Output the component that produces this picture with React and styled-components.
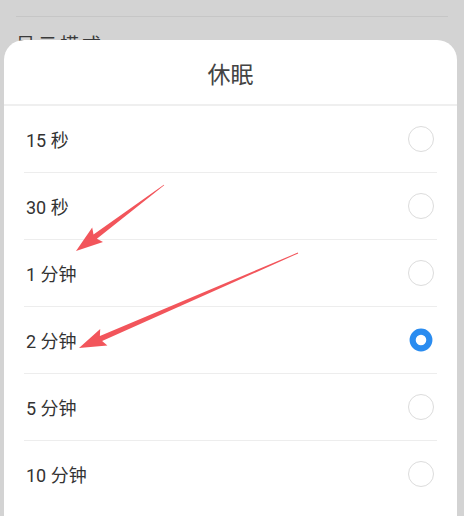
import React from 'react';
import styled, { createGlobalStyle } from 'styled-components';

const GlobalStyle = createGlobalStyle`
  html, body {
    margin: 0;
    padding: 0;
    background: #d3d3d3;
    font-family: Roboto, "Noto Sans CJK SC", sans-serif;
  }
`;

const Screen = styled.div`
  position: relative;
  width: 464px;
  height: 516px;
  overflow: hidden;
  background-color: #d3d3d3;
`;

const BehindList = styled.div`
  padding: 16px 16px 0 16px;
`;

const BehindRow = styled.div`
  border-top: 1px solid #c6c6c6;
  padding-top: 13px;
  font-size: 19px;
  color: #3a3a3a;
  letter-spacing: 3px;
`;

// the bottom sheet lies over the settings page
const Sheet = styled.div`
  position: absolute;
  left: 4px;
  right: 7px;
  top: 40px;
  bottom: 0;
  background-color: #fff;
  border-radius: 20px 20px 0 0;
  display: flex;
  flex-flow: column;
`;

const Header = styled.div`
  height: 66px;
  box-sizing: border-box;
  display: flex;
  justify-content: center;
  align-items: center;
  padding-top: 2px;
  font-size: 23px;
  color: #444;
  border-bottom: 2px solid #efefef;
`;

const List = styled.div`
  display: flex;
  flex-flow: column;
  padding: 0 20px;
`;

const Row = styled.div`
  height: 67px;
  display: flex;
  align-items: center;
  justify-content: space-between;
  border-bottom: 1px solid ${p => (p.$last ? 'transparent' : '#ededed')};
  box-sizing: border-box;

  & > span {
    font-size: 18px;
    color: #333;
    padding-left: 2px;
  }
`;

const Radio = styled.div`
  width: 26px;
  height: 26px;
  margin-right: 3px;
  border-radius: 50%;
  box-sizing: border-box;
  border: ${p => (p.$checked ? '7px solid #2a8cf0' : '1.5px solid #dcdcdc')};
  ${p => p.$checked && 'transform: scale(0.88);'}
`;

const Overlay = styled.svg`
  position: absolute;
  left: 0;
  top: 0;
  pointer-events: none;
`;

const options = ['15 秒', '30 秒', '1 分钟', '2 分钟', '5 分钟', '10 分钟'];

function arrowPoints(tx, ty, hx, hy) {
  const len = Math.hypot(hx - tx, hy - ty);
  const dx = (hx - tx) / len;
  const dy = (hy - ty) / len;
  const nx = -dy;
  const ny = dx;
  const L = 24;
  const W = 9;
  const bx = hx - dx * L;
  const by = hy - dy * L;
  const wx = bx - dx * 3;
  const wy = by - dy * 3;
  const pts = [
    [tx + nx * 0.4, ty + ny * 0.4],
    [bx + nx * 2.8, by + ny * 2.8],
    [wx + nx * W, wy + ny * W],
    [hx, hy],
    [wx - nx * W, wy - ny * W],
    [bx - nx * 2.8, by - ny * 2.8],
    [tx - nx * 0.4, ty - ny * 0.4],
  ];
  return pts.map(p => p.map(v => v.toFixed(1)).join(',')).join(' ');
}

export default function App() {
  return (
    <Screen>
      <GlobalStyle />
      <BehindList>
        <BehindRow>显示模式</BehindRow>
      </BehindList>
      <Sheet>
        <Header>休眠</Header>
        <List>
          {options.map((o, i) => (
            <Row key={o} $last={i === options.length - 1}>
              <span>{o}</span>
              <Radio $checked={o === '2 分钟'} />
            </Row>
          ))}
        </List>
      </Sheet>
      <Overlay width="464" height="516" viewBox="0 0 464 516">
        <polygon points={arrowPoints(164, 185, 76, 251)} fill="#f2555b" />
        <polygon points={arrowPoints(298, 253, 79, 348)} fill="#f2555b" />
      </Overlay>
    </Screen>
  );
}
